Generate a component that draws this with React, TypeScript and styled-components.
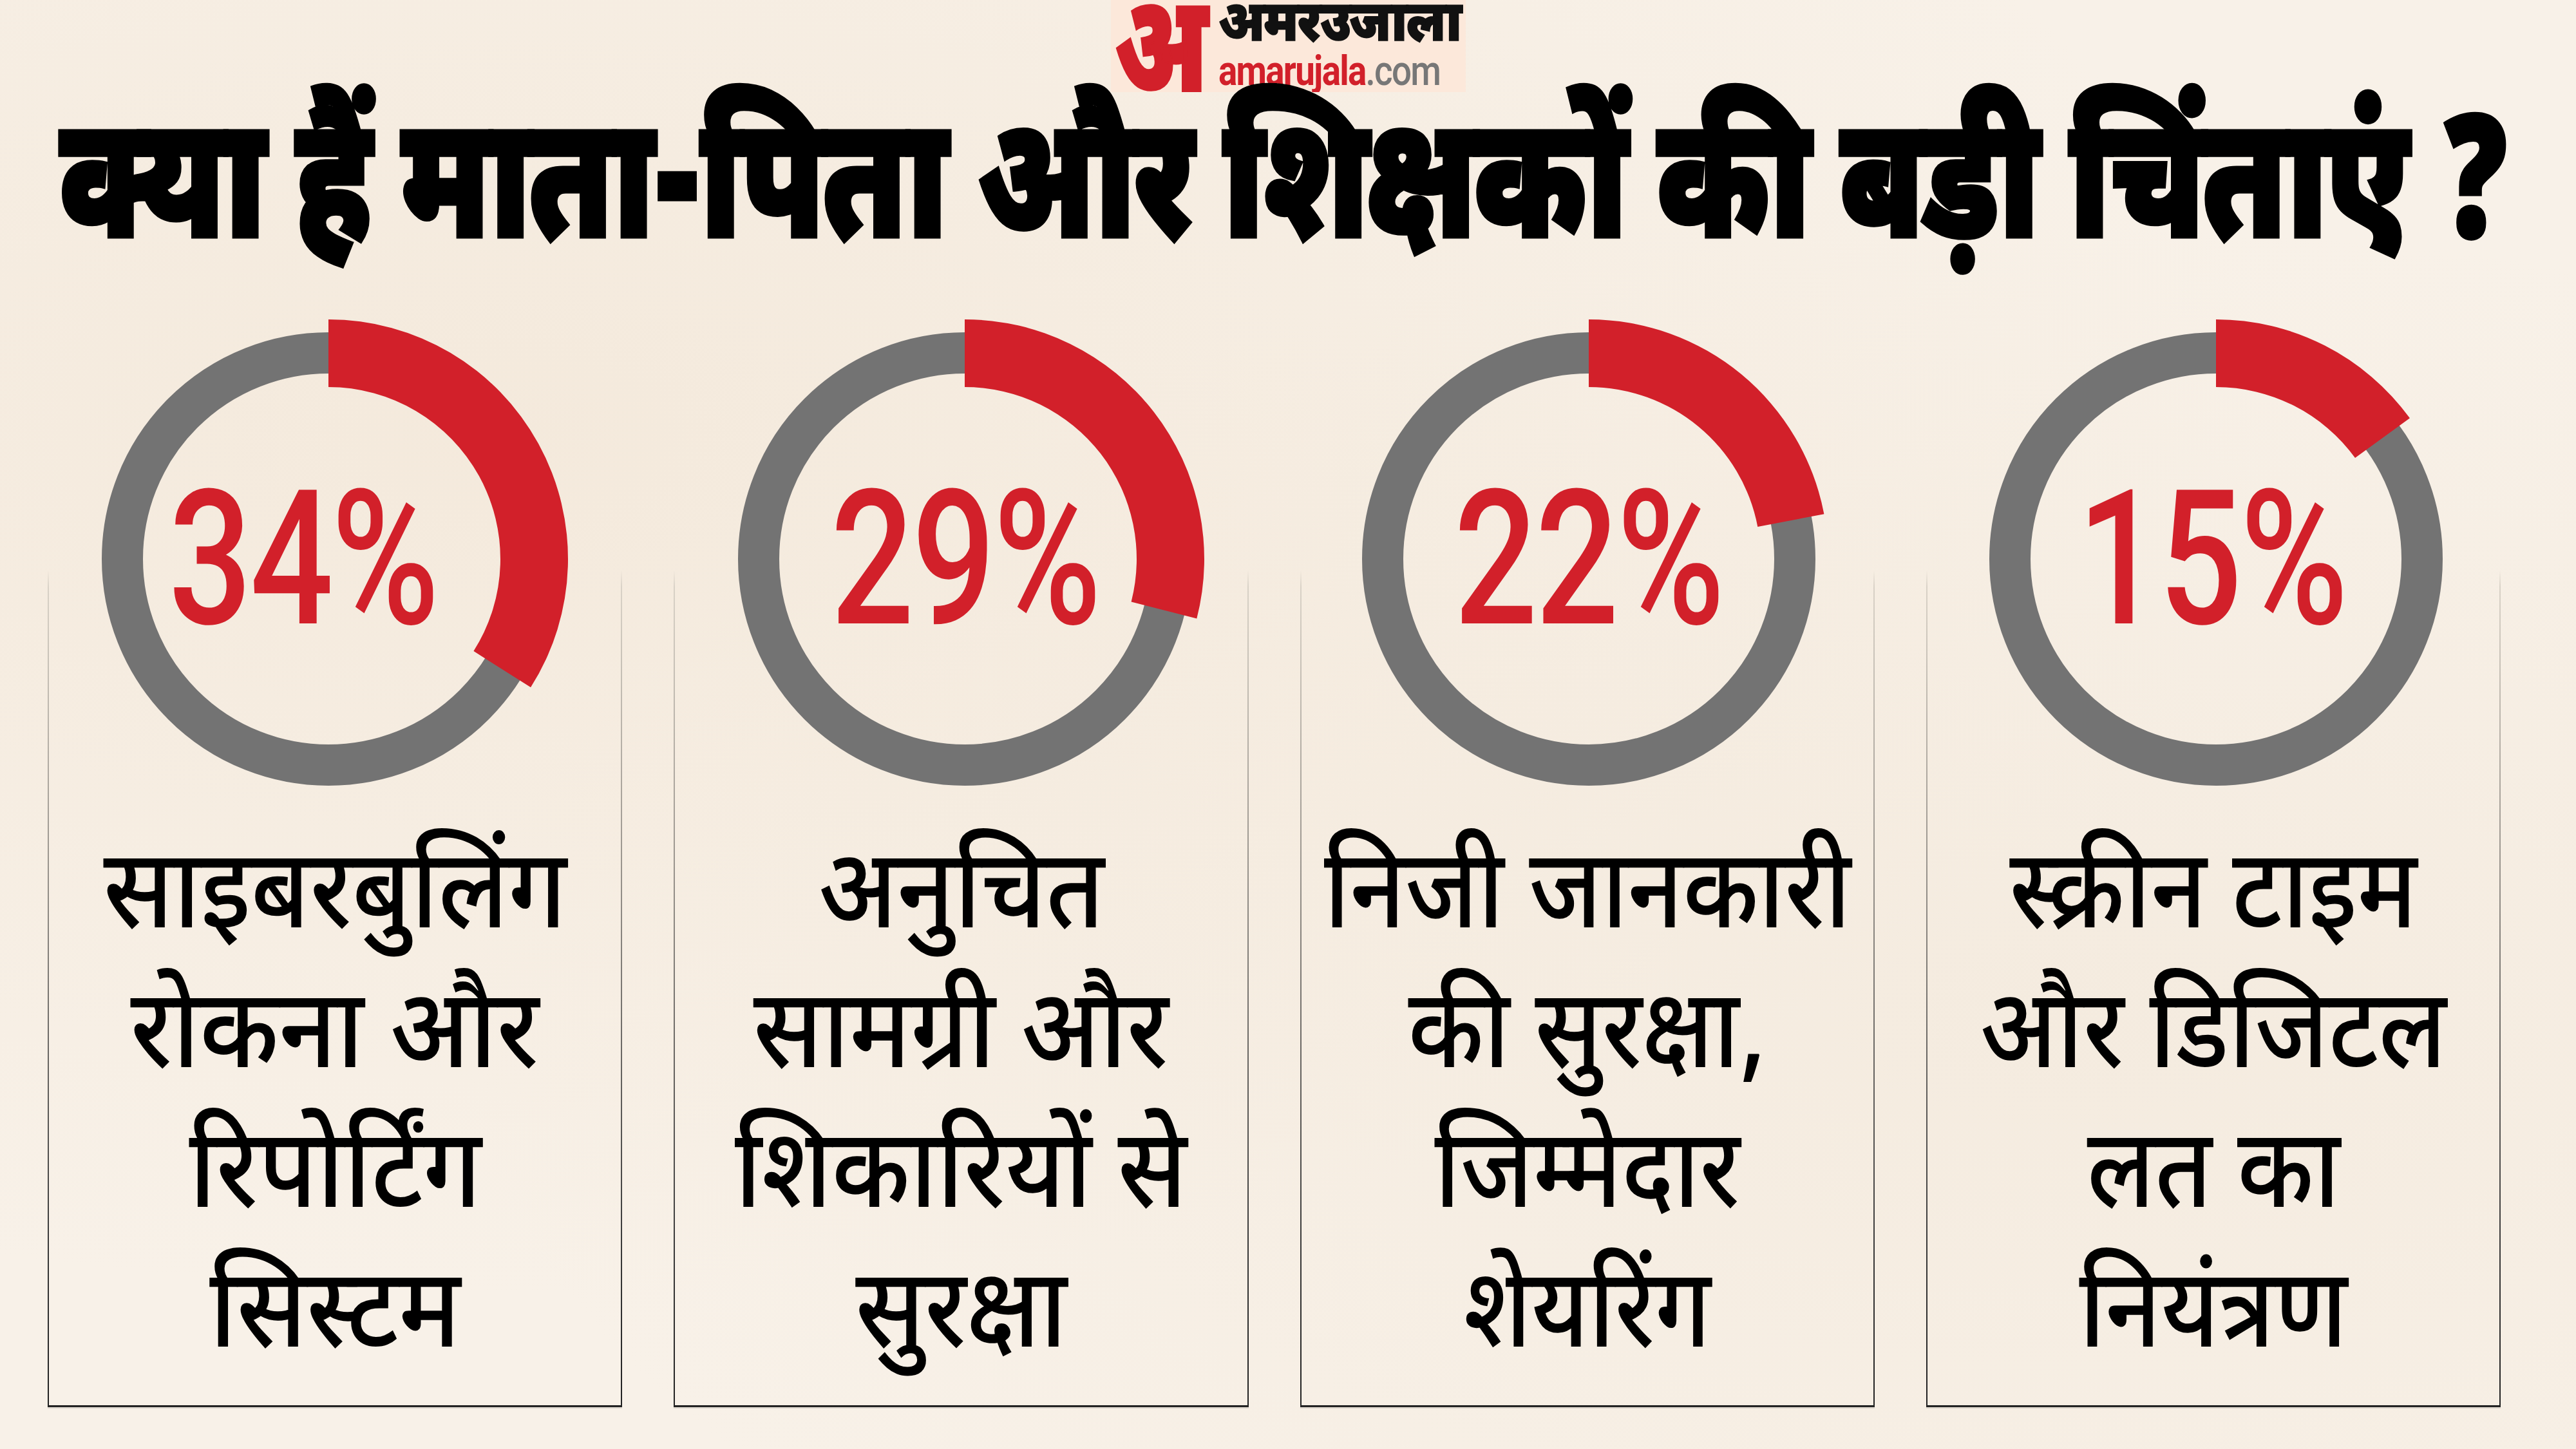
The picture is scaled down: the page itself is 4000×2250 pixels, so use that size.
import React from "react";
import styled, { createGlobalStyle } from "styled-components";

const GlobalStyle = createGlobalStyle`
  html, body { margin: 0; padding: 0; }
  body {
    background: #f7efe5;
    font-family: "Noto Sans Devanagari", "Noto Sans", "Liberation Sans", sans-serif;
  }
`;

const DEVA = `"Noto Sans Devanagari", "Noto Sans", "Liberation Sans", sans-serif`;

const Page = styled.div`
  width: 4000px;
  height: 2250px;
  overflow: hidden;
  display: flex;
  flex-direction: column;
  align-items: center;
  background:
    radial-gradient(ellipse at 20% 30%, rgba(240, 226, 208, 0.5), transparent 60%),
    radial-gradient(ellipse at 80% 70%, rgba(240, 228, 212, 0.45), transparent 55%),
    #f8f1e8;
`;

const Logo = styled.div`
  width: 551px;
  height: 143px;
  background: #fce8da;
  display: flex;
  align-items: center;
  box-sizing: border-box;
  padding-left: 4px;
  overflow: hidden;
`;

const LogoMark = styled.div`
  width: 150px;
  flex-shrink: 0;
  align-self: flex-start;
  margin-top: -17px;
  margin-left: -20px;
  text-align: center;
  font-family: ${DEVA};
  font-weight: 900;
  font-size: 223px;
  line-height: 223px;
  height: 223px;
  color: #d2202a;
  -webkit-text-stroke: 3px #d2202a;
  transform: scaleX(0.72);
`;

const LogoWords = styled.div`
  display: flex;
  flex-direction: column;
  justify-content: center;
  gap: 4px;
  margin-top: 2px;
  margin-left: 33px;
`;

const LogoHindi = styled.div`
  font-family: ${DEVA};
  font-weight: 900;
  font-size: 88px;
  line-height: 72px;
  color: #111;
  letter-spacing: -2px;
  -webkit-text-stroke: 1.5px #111;
  transform: scaleX(0.9);
  transform-origin: left center;
  white-space: nowrap;
`;

const LogoLatin = styled.div`
  font-family: "Roboto", "Liberation Sans", sans-serif;
  font-weight: 700;
  font-size: 64px;
  line-height: 58px;
  letter-spacing: -2px;
  color: #d2202a;
  transform: scaleX(0.855);
  transform-origin: left center;
  white-space: nowrap;
`;

const LogoCom = styled.span`
  color: #777;
  font-weight: 500;
`;

const TitleBar = styled.div`
  height: 345px;
  width: 100%;
  display: flex;
  justify-content: center;
  align-items: flex-start;
`;

const Title = styled.h1`
  margin: 0;
  font-family: ${DEVA};
  font-weight: 900;
  font-size: 262px;
  line-height: 320px;
  color: #000;
  -webkit-text-stroke: 7px #000;
  white-space: nowrap;
  letter-spacing: -4px;
  transform: scaleX(0.766);
  transform-origin: center top;
  margin-left: -10px;
`;

const Grid = styled.div`
  width: 100%;
  box-sizing: border-box;
  padding: 0 117px 0 74px;
  display: grid;
  grid-template-columns: repeat(4, minmax(0, 1fr));
  column-gap: 80px;
  height: 1697px;
`;

const Card = styled.div`
  display: flex;
  flex-direction: column;
  align-items: center;
  min-width: 0;
  border-style: solid;
  border-width: 0 2px 3px 2px;
  border-image: linear-gradient(
      to bottom,
      rgba(0, 0, 0, 0) 0%,
      rgba(0, 0, 0, 0) 23.5%,
      #d9d2c7 25%,
      #9b968f 50%,
      #3a3a3a 85%,
      #222 100%
    )
    1;
  box-shadow: 0 2px 0 rgba(0, 0, 0, 0.12);
`;

const DonutWrap = styled.div<{ $dx: number }>`
  width: 760px;
  height: 760px;
  position: relative;
  display: flex;
  align-items: center;
  justify-content: center;
  flex-shrink: 0;
  margin-left: ${(p) => p.$dx * 2}px;
`;

const DonutSvg = styled.svg`
  position: absolute;
  inset: 0;
`;

const Pct = styled.div<{ $dx: number }>`
  position: relative;
  left: ${(p) => p.$dx}px;
  font-family: "Roboto", "Liberation Sans", sans-serif;
  font-weight: 500;
  font-size: 292px;
  line-height: 1;
  color: #d2202a;
  transform: scaleX(0.78);
  letter-spacing: -4px;
`;

const Text = styled.div`
  margin-top: 42px;
  display: flex;
  flex-direction: column;
  align-items: center;
`;

const Line = styled.div<{ $sx: number }>`
  font-family: ${DEVA};
  font-weight: 500;
  font-size: 172px;
  line-height: 217px;
  color: #000;
  white-space: nowrap;
  transform: scaleX(${(p) => p.$sx});
`;

type Item = { pct: number; lines: string[]; sx: number; ringDx: number; numDx: number };

const ITEMS: Item[] = [
  { pct: 34, lines: ["साइबरबुलिंग", "रोकना और", "रिपोर्टिंग", "सिस्टम"], sx: 0.91, ringDx: -10, numDx: -40 },
  { pct: 29, lines: ["अनुचित", "सामग्री और", "शिकारियों से", "सुरक्षा"], sx: 0.9, ringDx: 6, numDx: 0 },
  { pct: 22, lines: ["निजी जानकारी", "की सुरक्षा,", "जिम्मेदार", "शेयरिंग"], sx: 0.87, ringDx: 2, numDx: 0 },
  { pct: 15, lines: ["स्क्रीन टाइम", "और डिजिटल", "लत का", "नियंत्रण"], sx: 0.88, ringDx: 4, numDx: -6 },
];

const C = 380;

function sector(pct: number, r1: number, r2: number) {
  const a = (pct / 100) * Math.PI * 2;
  const x = (r: number) => C + r * Math.sin(a);
  const y = (r: number) => C - r * Math.cos(a);
  const large = pct > 50 ? 1 : 0;
  return [
    `M ${C} ${C - r2}`,
    `A ${r2} ${r2} 0 ${large} 1 ${x(r2)} ${y(r2)}`,
    `L ${x(r1)} ${y(r1)}`,
    `A ${r1} ${r1} 0 ${large} 0 ${C} ${C - r1}`,
    "Z",
  ].join(" ");
}

function Donut({ pct, ringDx, numDx }: { pct: number; ringDx: number; numDx: number }) {
  return (
    <DonutWrap $dx={ringDx}>
      <DonutSvg width={760} height={760} viewBox="0 0 760 760">
        <circle cx={C} cy={C} r={320} fill="none" stroke="#737373" strokeWidth={64} />
        <path d={sector(pct, 267, 372)} fill="#d2202a" />
      </DonutSvg>
      <Pct $dx={numDx}>{pct}%</Pct>
    </DonutWrap>
  );
}

export default function App() {
  return (
    <Page>
      <GlobalStyle />
      <Logo>
        <LogoMark>अ</LogoMark>
        <LogoWords>
          <LogoHindi>अमरउजाला</LogoHindi>
          <LogoLatin>
            amarujala<LogoCom>.com</LogoCom>
          </LogoLatin>
        </LogoWords>
      </Logo>
      <TitleBar>
        <Title>क्या हैं माता-पिता और शिक्षकों की बड़ी चिंताएं ?</Title>
      </TitleBar>
      <Grid>
        {ITEMS.map((it) => (
          <Card key={it.pct}>
            <Donut pct={it.pct} ringDx={it.ringDx} numDx={it.numDx} />
            <Text>
              {it.lines.map((l) => (
                <Line key={l} $sx={it.sx}>
                  {l}
                </Line>
              ))}
            </Text>
          </Card>
        ))}
      </Grid>
    </Page>
  );
}
